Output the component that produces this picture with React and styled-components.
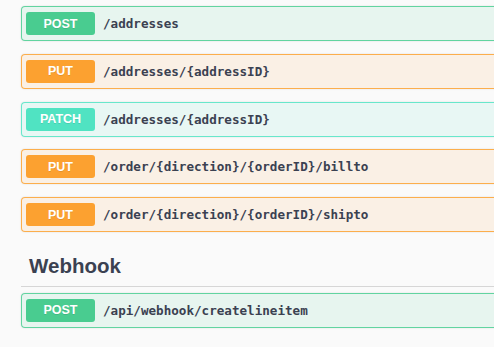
import React from "react";
import styled, { createGlobalStyle } from "styled-components";

const GlobalStyle = createGlobalStyle`
  html, body {
    margin: 0;
    padding: 0;
    background: #fafafa;
    overflow: hidden;
  }
`;

const METHODS = {
  POST: { color: "73, 204, 144" },
  PUT: { color: "252, 161, 48" },
  PATCH: { color: "80, 227, 194" },
};

const Page = styled.div`
  width: 520px;
  padding: 6px 0 0 21px;
  font-family: "Liberation Sans", Arial, sans-serif;
  color: #3b4151;
`;

const Block = styled.div`
  display: flex;
  align-items: center;
  height: 35px;
  box-sizing: border-box;
  padding: 0 4px;
  margin-bottom: 12.75px;
  border: 1px solid rgba(${(p) => p.$rgb}, 0.85);
  border-radius: 4px;
  background: rgba(${(p) => p.$rgb}, 0.1);
  box-shadow: 0 0 2px rgba(0, 0, 0, 0.12);
`;

const Badge = styled.span`
  display: flex;
  align-items: center;
  justify-content: center;
  width: 69px;
  height: 23px;
  border-radius: 3px;
  background: rgb(${(p) => p.$rgb});
  color: #fff;
  font-size: 12.5px;
  font-weight: 700;
  text-shadow: 0 1px 0 rgba(0, 0, 0, 0.1);
`;

const Path = styled.span`
  margin-left: 8px;
  font-family: "DejaVu Sans Mono", monospace;
  font-size: 12.6px;
  font-weight: 700;
  color: #3b4151;
`;

const Section = styled.h3`
  margin: 21.5px 0 6px;
  padding: 0 0 8px 8px;
  font-size: 20.5px;
  line-height: 24px;
  font-weight: 700;
  border-bottom: 1px solid #d6d6d6;
`;

const Op = ({ method, path }) => {
  const rgb = METHODS[method].color;
  return (
    <Block $rgb={rgb}>
      <Badge $rgb={rgb}>{method}</Badge>
      <Path>{path}</Path>
    </Block>
  );
};

export default function App() {
  return (
    <Page>
      <GlobalStyle />
      <Op method="POST" path="/addresses" />
      <Op method="PUT" path="/addresses/{addressID}" />
      <Op method="PATCH" path="/addresses/{addressID}" />
      <Op method="PUT" path="/order/{direction}/{orderID}/billto" />
      <Op method="PUT" path="/order/{direction}/{orderID}/shipto" />
      <Section>Webhook</Section>
      <Op method="POST" path="/api/webhook/createlineitem" />
    </Page>
  );
}
